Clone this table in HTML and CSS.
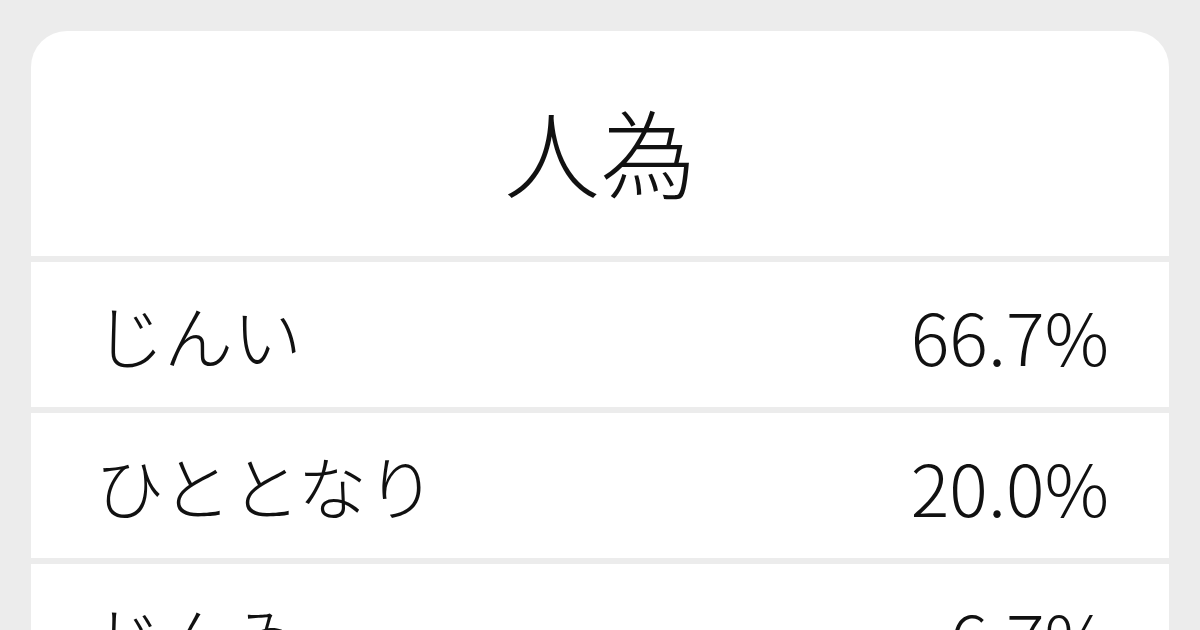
FILE: index.html
```html
<!DOCTYPE html>
<html lang="ja">
<head>
<meta charset="utf-8">
<link rel="stylesheet" href="styles.css">
</head>
<body>
<main class="card">
  <header class="title-box">
    <h1 class="title">人為</h1>
  </header>
  <div class="row"><span class="reading">じんい</span><span class="pct">66.7%</span></div>
  <div class="row"><span class="reading">ひととなり</span><span class="pct">20.0%</span></div>
  <div class="row"><span class="reading">じんゐ</span><span class="pct">6.7%</span></div>
</main>
</body>
</html>
```
FILE: styles.css
```css
* { box-sizing: border-box; }
html, body { margin: 0; padding: 0; }
body {
  width: 1200px;
  height: 630px;
  overflow: hidden;
  background: #ececec;
  font-family: "Noto Sans CJK JP", "Noto Sans", sans-serif;
  font-weight: 300;
  color: #111;
  padding: 31px 31px 0 31px;
}
.card {
  display: flex;
  flex-direction: column;
  gap: 6px;
}
.title-box {
  background: #fff;
  border-radius: 36px 36px 0 0;
  height: 225px;
  display: flex;
  align-items: center;
  justify-content: center;
  padding-top: 12px;
}
.title {
  margin: 0;
  font-size: 96px;
  font-weight: 300;
  line-height: 1;
}
.row {
  background: #fff;
  height: 145px;
  display: flex;
  align-items: center;
  justify-content: space-between;
  padding: 0 60px 0 64px;
  line-height: 1;
}
.reading {
  font-size: 69px;
}
.pct {
  font-size: 72px;
}
```
